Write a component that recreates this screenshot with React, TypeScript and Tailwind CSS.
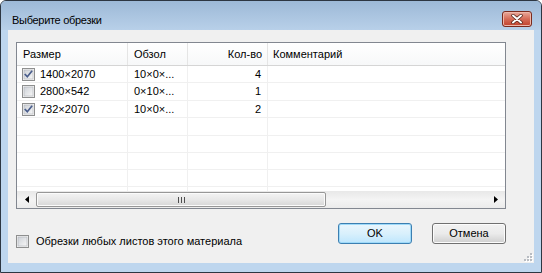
const rows = [
  { size: '1400×2070', obz: '10×0×...', qty: '4', checked: true, h: 'h-[17px]' },
  { size: '2800×542', obz: '0×10×...', qty: '1', checked: false, h: 'h-[18px]' },
  { size: '732×2070', obz: '10×0×...', qty: '2', checked: true, h: 'h-[17px]' },
  { h: 'h-[18px]' },
  { h: 'h-[17px]' },
  { h: 'h-[17px]' },
  { h: 'h-[17px]' },
  { h: 'h-[17px]' },
];

const CheckBox = ({ checked }: { checked?: boolean }) => (
  <svg width="13" height="13" viewBox="0 0 13 13" className="shrink-0">
    <defs>
      <linearGradient id="cbg" x1="0" y1="0" x2="1" y2="1">
        <stop offset="0" stopColor="#cdd1d7" />
        <stop offset="1" stopColor="#f7f7f7" />
      </linearGradient>
    </defs>
    <rect x="0.5" y="0.5" width="12" height="12" fill="#f4f4f4" stroke="#8e8f8f" />
    <rect x="2" y="2" width="9" height="9" fill="url(#cbg)" stroke="#aeb3b9" strokeWidth="0.6" />
    {checked && (
      <path d="M3.3 6.6 L5.3 8.8 L9.6 3.4" fill="none" stroke="#4a5e8c" strokeWidth="1.7" strokeLinecap="square" />
    )}
  </svg>
);

const Button = ({ label, def }: { label: string; def?: boolean }) => (
  <button
    className={
      def
        ? 'h-[21px] w-[74px] rounded-[3px] border border-[#3c7fb1] bg-gradient-to-b from-[#eaf6fd] via-[#d9f0fc] to-[#bee6fd] text-[11px] text-black shadow-[inset_0_0_0_1px_#9fdaf9]'
        : 'h-[21px] w-[74px] rounded-[3px] border border-[#707070] bg-gradient-to-b from-[#f2f2f2] via-[#ebebeb] to-[#cfcfcf] text-[11px] text-black shadow-[inset_0_0_0_1px_#fcfcfc]'
    }
  >
    {label}
  </button>
);

export default function App() {
  return (
    <div className="h-[273px] w-[542px] bg-white" style={{ fontFamily: '"Liberation Sans", Tahoma, sans-serif' }}>
      <div className="flex h-[273px] w-[542px] flex-col overflow-hidden rounded-t-[6px] border border-[#2d3642] bg-[#bed6ee]">
        {/* title bar */}
        <div className="flex h-[29px] shrink-0 items-start justify-between bg-gradient-to-b from-[#9db9d7] to-[#b8d0e9]">
          <span className="pl-[11px] pt-[11px] text-[11px] leading-[16px] tracking-[-0.3px] text-black">
            Выберите обрезки
          </span>
          <div className="mr-[9px] mt-[10px] flex h-[16px] w-[30px] items-center justify-center rounded-[3px] border border-[#7a2a1d] bg-gradient-to-b from-[#e8a99c] via-[#d56b57] to-[#c0402b] shadow-[inset_0_0_0_1px_#eeb7aa]">
            <svg width="12" height="10" viewBox="0 0 12 10">
              <path d="M2 1.5 L10 8.5 M10 1.5 L2 8.5" stroke="#4a1d14" strokeWidth="3.4" strokeLinecap="round" />
              <path d="M2 1.5 L10 8.5 M10 1.5 L2 8.5" stroke="#ffffff" strokeWidth="2" strokeLinecap="round" />
            </svg>
          </div>
        </div>

        {/* client area */}
        <div className="relative mx-[7px] mb-[9px] flex flex-1 flex-col bg-[#f0f0f0] pl-[8px] pr-[28px] pt-[12px]">
          {/* list view */}
          <div className="flex h-[167px] w-[490px] flex-col border border-[#828790] bg-white text-[11px] text-black">
            <div className="flex h-[23px] shrink-0 items-center border-b border-[#d5d5d5] bg-gradient-to-b from-white to-[#f7f8f9]">
              <div className="flex h-full w-[111px] items-center border-r border-[#e5e5e5] pl-[6px]">Размер</div>
              <div className="flex h-full w-[60px] items-center border-r border-[#e5e5e5] pl-[6px]">Обзол</div>
              <div className="flex h-full w-[80px] items-center justify-end border-r border-[#e5e5e5] pr-[5px]">Кол-во</div>
              <div className="flex h-full flex-1 items-center pl-[5px]">Комментарий</div>
            </div>
            <div className="flex-1 overflow-hidden">
              {rows.map((r, i) => (
                <div key={i} className={`flex ${r.h} items-center border-b border-[#f0f0f0]`}>
                  <div className="flex h-full w-[111px] items-center gap-[5px] border-r border-[#f0f0f0] pl-[5px]">
                    {r.size && <CheckBox checked={r.checked} />}
                    {r.size}
                  </div>
                  <div className="flex h-full w-[60px] items-center border-r border-[#f0f0f0] pl-[6px]">{r.obz}</div>
                  <div className="flex h-full w-[80px] items-center justify-end border-r border-[#f0f0f0] pr-[6px]">{r.qty}</div>
                  <div className="h-full flex-1" />
                </div>
              ))}
            </div>
            {/* horizontal scrollbar */}
            <div className="flex h-[17px] shrink-0 items-center bg-gradient-to-b from-[#e8e8e8] via-[#f4f4f4] to-[#ebebeb]">
              <div className="flex h-full w-[19px] items-center justify-center">
                <svg width="4" height="7" viewBox="0 0 4 7"><path d="M4 0 L0 3.5 L4 7 Z" fill="#000" /></svg>
              </div>
              <div className="flex h-[15px] w-[290px] items-center justify-center rounded-[2px] border border-[#979797] bg-gradient-to-b from-[#f3f3f3] via-[#e8e8e8] to-[#d6d6d6] shadow-[inset_0_0_0_1px_#fbfbfb]">
                <svg width="7" height="6" viewBox="0 0 7 6">
                  <path d="M0.5 0 V6 M3.5 0 V6 M6.5 0 V6" stroke="#4e4e4e" strokeWidth="1" />
                </svg>
              </div>
              <div className="flex-1" />
              <div className="flex h-full w-[19px] items-center justify-center">
                <svg width="4" height="7" viewBox="0 0 4 7"><path d="M0 0 L4 3.5 L0 7 Z" fill="#000" /></svg>
              </div>
            </div>
          </div>

          {/* bottom row */}
          <div className="mt-[14px] flex w-[490px] items-start justify-between">
            <label className="mt-[10px] flex items-center gap-[7px] text-[11px] text-black">
              <CheckBox />
              Обрезки любых листов этого материала
            </label>
            <div className="flex gap-[20px]">
              <Button label="OK" def />
              <Button label="Отмена" />
            </div>
          </div>

          {/* resize grip */}
          <svg width="10" height="10" viewBox="0 0 10 10" className="absolute bottom-[1px] right-[1px]">
            {[
              [7, 1], [4, 4], [7, 4], [1, 7], [4, 7], [7, 7],
            ].map(([x, y], i) => (
              <g key={i}>
                <rect x={x + 1} y={y + 1} width="2" height="2" fill="#ffffff" />
                <rect x={x} y={y} width="2" height="2" fill="#b8bcc2" />
              </g>
            ))}
          </svg>
        </div>
      </div>
    </div>
  );
}
